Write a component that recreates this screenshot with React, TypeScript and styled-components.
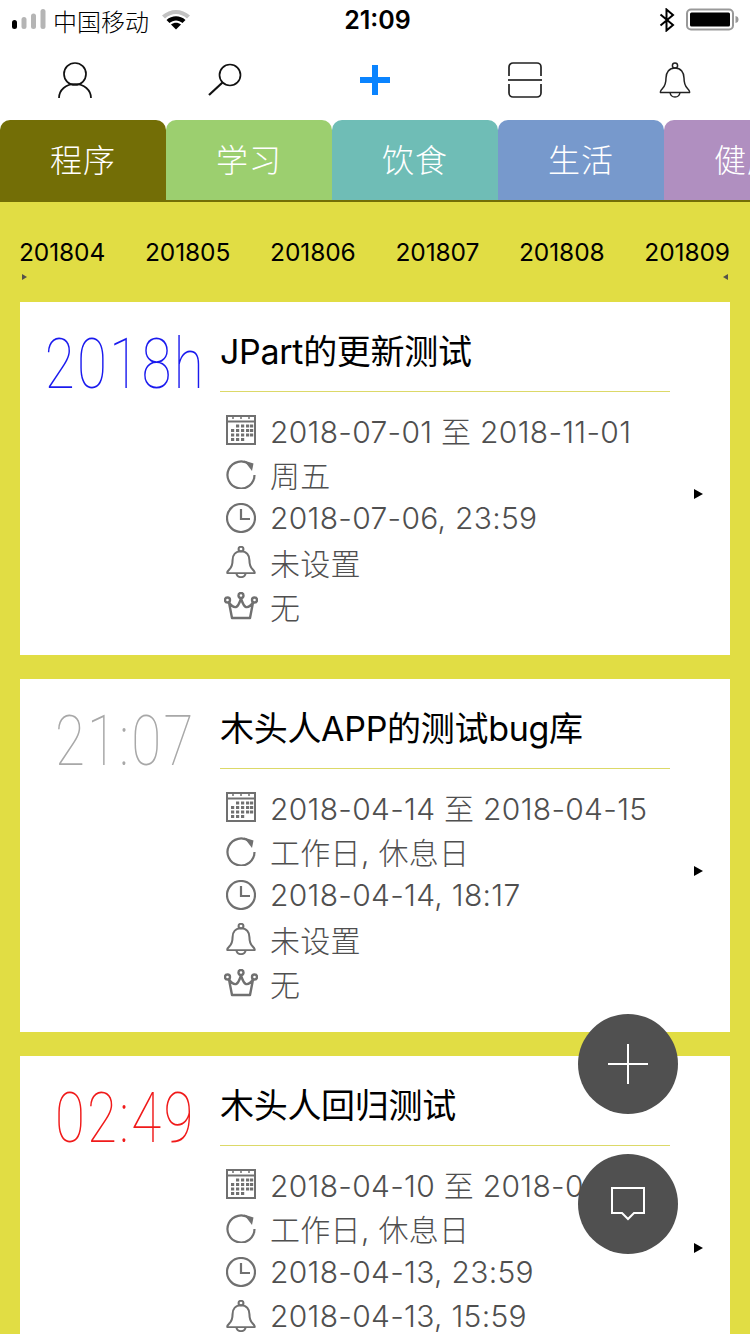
import React from 'react';
import styled, { createGlobalStyle } from 'styled-components';

const GlobalStyle = createGlobalStyle`
  html, body {
    margin: 0;
    padding: 0;
    background: #fff;
  }
  * {
    box-sizing: border-box;
  }
`;

const FONT = `Inter, "Noto Sans CJK SC", sans-serif`;

const Screen = styled.div`
  position: relative;
  width: 750px;
  height: 1334px;
  overflow: hidden;
  font-family: ${FONT};
  background: #e1dd44;
`;

const Top = styled.div`
  background: #fff;
`;

const StatusBar = styled.div`
  display: grid;
  grid-template-columns: 1fr auto 1fr;
  align-items: center;
  height: 40px;
  padding: 0 10px 0 12px;
  color: #000;
`;

const StatusLeft = styled.div`
  display: flex;
  align-items: center;
  gap: 7px;
  font-size: 24px;
  font-weight: 300;
`;

const StatusTime = styled.div`
  font-size: 25px;
  font-weight: 600;
  padding-left: 3px;
`;

const StatusRight = styled.div`
  display: flex;
  justify-content: flex-end;
  align-items: center;
  gap: 11px;
`;

const Nav = styled.div`
  display: grid;
  grid-template-columns: repeat(5, 150px);
  height: 80px;
`;

const NavItem = styled.div`
  display: flex;
  align-items: center;
  justify-content: center;
`;

const Tabs = styled.div`
  display: flex;
  height: 82px;
  border-bottom: 2px solid #736e06;
`;

const Tab = styled.div<{ $bg: string }>`
  flex: 0 0 166px;
  display: flex;
  align-items: center;
  justify-content: center;
  padding-bottom: 4px;
  border-radius: 10px 10px 0 0;
  background: ${(p) => p.$bg};
  color: #fff;
  font-size: 32px;
  font-weight: 300;
  letter-spacing: 1px;
`;

const Months = styled.div`
  display: flex;
  justify-content: space-between;
  padding: 35px 20px 0 19px;
  height: 61px;
  font-size: 24.5px;
  letter-spacing: -0.1px;
  line-height: 30px;
  color: #000;
`;

const MonthMarks = styled.div`
  display: flex;
  justify-content: space-between;
  align-items: center;
  height: 28px;
  margin-bottom: 11px;
  padding: 0 22px;
`;

const MonthMark = styled.div<{ $flip?: boolean }>`
  width: 0;
  height: 0;
  border-top: 3px solid transparent;
  border-bottom: 3px solid transparent;
  ${(p) => (p.$flip ? 'border-right: 5px solid #55524a;' : 'border-left: 5px solid #55524a;')}
`;

const CardList = styled.div`
  display: flex;
  flex-direction: column;
  gap: 24px;
  padding: 0 20px;
`;

const Card = styled.div`
  display: flex;
  flex: 0 0 353px;
  background: #fff;
`;

const TimeColumn = styled.div`
  flex: 0 0 200px;
  min-width: 0;
  display: flex;
  justify-content: center;
  padding: 24px 0 0 10px;
`;

const TimeValue = styled.div<{ $color: string }>`
  flex: none;
  height: 76px;
  font-family: Roboto, sans-serif;
  font-weight: 100;
  font-size: 70px;
  line-height: 76px;
  letter-spacing: 3px;
  white-space: nowrap;
  color: ${(p) => p.$color};
  transform: scaleX(0.78);
`;

const Body = styled.div`
  flex: 0 0 450px;
  padding-top: 28px;
`;

const Title = styled.div`
  height: 62px;
  line-height: 44px;
  font-size: 34px;
  letter-spacing: -0.3px;
  color: #000;
  border-bottom: 1px solid #dcd968;
`;

const Rows = styled.div`
  padding-top: 18px;
`;

const Row = styled.div`
  display: flex;
  align-items: center;
  height: 44px;
  padding-bottom: 4px;
  font-size: 30px;
  font-weight: 300;
  letter-spacing: 0.3px;
  color: #4f4f4f;
  white-space: nowrap;
`;

const RowIcon = styled.div`
  flex: 0 0 50px;
  display: flex;
  justify-content: center;
  padding-right: 9px;
`;

const Chevron = styled.div`
  align-self: center;
  margin: 30px 0 0 24px;
  width: 0;
  height: 0;
  border-top: 5px solid transparent;
  border-bottom: 5px solid transparent;
  border-left: 9px solid #000;
`;

const Fab = styled.div<{ $top: number }>`
  position: absolute;
  left: 578px;
  top: ${(p) => p.$top}px;
  width: 100px;
  height: 100px;
  border-radius: 50%;
  background: #505050;
  display: flex;
  align-items: center;
  justify-content: center;
`;

const Glyph = styled.svg`
  display: block;
  flex: none;
`;

const PersonIcon = () => (
  <Glyph width="34" height="38" viewBox="0 0 34 38" fill="none" stroke="#111" strokeWidth="1.700">
    <circle cx="17" cy="13" r="11" />
    <path d="M1 37c0-8 7-14 16-14s16 6 16 14" />
  </Glyph>
);

const SearchIcon = () => (
  <Glyph width="34" height="34" viewBox="0 0 34 34" fill="none" stroke="#111" strokeWidth="1.700">
    <circle cx="22" cy="12" r="10.500" />
    <path d="M14.500 19.500 1 32" strokeWidth="2.200" />
  </Glyph>
);

const PlusBlue = () => (
  <Glyph width="30" height="30" viewBox="0 0 30 30" fill="#0a84ff">
    <path d="M12 0h6v12h12v6H18v12h-6V18H0v-6h12z" />
  </Glyph>
);

const ScanIcon = () => (
  <Glyph width="36" height="36" viewBox="0 0 36 36" fill="none" stroke="#222" strokeWidth="1.700">
    <path d="M2 14V5a4 4 0 0 1 4-4h24a4 4 0 0 1 4 4v9" />
    <path d="M2 22v9a4 4 0 0 0 4 4h24a4 4 0 0 0 4-4v-9" />
    <path d="M1 18h34" strokeWidth="2.200" stroke="#444" />
  </Glyph>
);

const BellIcon = ({ w = 32, h = 36, color = '#222', sw = 1.500 }: { w?: number; h?: number; color?: string; sw?: number }) => (
  <Glyph width={w} height={h} viewBox="0 0 32 36" fill="none" stroke={color} strokeWidth={sw} preserveAspectRatio="none">
    <circle cx="16" cy="3.500" r="2.600" />
    <path d="M16 6c-6 0-9 4.500-9 10 0 5-1 8-3.500 10.500C2 28 1 29.500 1.500 30.500h29c.5-1-.5-2.500-2-4C26 24 25 21 25 16c0-5.500-3-10-9-10z" />
    <path d="M11 30.500c.5 3 2.500 4.500 5 4.500s4.500-1.500 5-4.500" />
  </Glyph>
);

const CalendarIcon = () => (
  <Glyph width="30" height="30" viewBox="0 0 30 30" fill="none" stroke="#707070">
    <rect x="1" y="1" width="28" height="28" strokeWidth="2" />
    <path d="M1 6.500h28" strokeWidth="2" />
    <path d="M7 1v3M15 1v3M23 1v3" strokeWidth="1.500" />
    <g fill="#707070" stroke="none">
      {[10.500, 15, 19.500, 24].flatMap((y, r) =>
        [5, 10, 15, 20, 24].map((x, c) =>
          (r === 0 && c < 1) || (r === 3 && c > 2) ? null : (
            <rect key={`${r}-${c}`} x={x} y={y - 1} width="3.200" height="3" />
          ),
        ),
      )}
    </g>
  </Glyph>
);

const RepeatIcon = () => (
  <Glyph width="30" height="30" viewBox="0 0 30 30" fill="none" stroke="#707070" strokeWidth="2.200">
    <path d="M23.500 5.500A13.500 13.500 0 1 0 28.500 16" />
    <path d="M18 1.500 27.500 4.500 26 12z" fill="#707070" stroke="none" />
  </Glyph>
);

const ClockIcon = () => (
  <Glyph width="30" height="30" viewBox="0 0 30 30" fill="none" stroke="#707070" strokeWidth="2.200">
    <circle cx="15" cy="15" r="14" />
    <path d="M15 6v10h9" />
  </Glyph>
);

const CrownIcon = () => (
  <Glyph width="34" height="28" viewBox="0 0 34 28" fill="none" stroke="#707070" strokeWidth="2.400">
    <circle cx="17" cy="3.500" r="2.500" />
    <circle cx="3.500" cy="8" r="2.500" />
    <circle cx="30.500" cy="8" r="2.500" />
    <path d="M5 10.500c2 3 4.500 5 7 4.500 2-.5 3.500-4 5-8.500 1.500 4.500 3 8 5 8.500 2.500.5 5-1.500 7-4.500L26 26H8z" strokeLinejoin="round" />
  </Glyph>
);

const SignalBars = () => (
  <Glyph width="34" height="22" viewBox="0 0 34 22">
    <rect x="0" y="11" width="5" height="9" rx="2.500" fill="#000" />
    <rect x="9.500" y="8" width="5" height="12" rx="2.500" fill="#b5b5b5" />
    <rect x="19" y="4.500" width="5" height="15.500" rx="2.500" fill="#b5b5b5" />
    <rect x="28.500" y="0" width="5" height="20" rx="2.500" fill="#b5b5b5" />
  </Glyph>
);

const WifiIcon = () => (
  <Glyph width="28" height="22" viewBox="0 0 28 22" style={{ marginLeft: 6 }}>
    <path d="M0 6.500C8-1 20-1 28 6.500l-3 3C18.500 3.500 9.500 3.500 3 9.500z" fill="#c2c2c2" />
    <path d="M4.500 11c5.500-5 13.500-5 19 0L20.500 14c-4-3.500-9-3.500-13 0z" fill="#000" />
    <path d="M9 15.500c3-2.500 7-2.500 10 0L14 20.500z" fill="#000" />
  </Glyph>
);

const BluetoothIcon = () => (
  <Glyph width="16" height="24" viewBox="0 0 16 24" fill="none" stroke="#000" strokeWidth="2">
    <path d="M1.500 6.500 14 17l-6.500 5.500v-21L14 7 1.500 17.500" />
  </Glyph>
);

const BatteryIcon = () => (
  <Glyph width="54" height="24" viewBox="0 0 54 24">
    <rect x="1" y="1.500" width="46" height="20" rx="4" fill="none" stroke="#999" strokeWidth="2" />
    <rect x="4" y="4.500" width="40" height="14" rx="1.500" fill="#000" />
    <path d="M49.500 8c2 .3 3 1.500 3 3.500s-1 3.200-3 3.500z" fill="#999" />
  </Glyph>
);

const FabPlus = () => (
  <Glyph width="40" height="40" viewBox="0 0 40 40" stroke="#fff" strokeWidth="2">
    <path d="M20 0v40M0 20h40" />
  </Glyph>
);

const FabComment = () => (
  <Glyph width="34" height="34" viewBox="0 0 34 34" fill="none" stroke="#fff" strokeWidth="2">
    <path d="M1 1h32v25H23l-6 6-6-6H1z" />
  </Glyph>
);

const tabs = [
  { label: '程序', bg: '#736e06' },
  { label: '学习', bg: '#9ccf6f' },
  { label: '饮食', bg: '#6fbdb6' },
  { label: '生活', bg: '#7799cc' },
  { label: '健康', bg: '#b08fc0' },
];

const months = ['201804', '201805', '201806', '201807', '201808', '201809'];

const cards = [
  {
    time: '2018h',
    color: '#1a1aee',
    title: 'JPart的更新测试',
    rows: ['2018-07-01 至 2018-11-01', '周五', '2018-07-06, 23:59', '未设置', '无'],
  },
  {
    time: '21:07',
    color: '#a8a8a8',
    title: '木头人APP的测试bug库',
    rows: ['2018-04-14 至 2018-04-15', '工作日, 休息日', '2018-04-14, 18:17', '未设置', '无'],
  },
  {
    time: '02:49',
    color: '#f01a1a',
    title: '木头人回归测试',
    rows: ['2018-04-10 至 2018-04-13', '工作日, 休息日', '2018-04-13, 23:59', '2018-04-13, 15:59', '无'],
  },
];

const rowIcons = [
  <CalendarIcon key="calendar" />,
  <RepeatIcon key="repeat" />,
  <ClockIcon key="clock" />,
  <BellIcon key="bell" w={30} h={32} color="#707070" sw={2.200} />,
  <CrownIcon key="crown" />,
];

export default function App() {
  return (
    <Screen>
      <GlobalStyle />
      <Top>
        <StatusBar>
          <StatusLeft>
            <SignalBars />
            <span>中国移动</span>
            <WifiIcon />
          </StatusLeft>
          <StatusTime>21:09</StatusTime>
          <StatusRight>
            <BluetoothIcon />
            <BatteryIcon />
          </StatusRight>
        </StatusBar>
        <Nav>
          <NavItem><PersonIcon /></NavItem>
          <NavItem><SearchIcon /></NavItem>
          <NavItem><PlusBlue /></NavItem>
          <NavItem><ScanIcon /></NavItem>
          <NavItem><BellIcon /></NavItem>
        </Nav>
        <Tabs>
          {tabs.map((tab) => (
            <Tab key={tab.label} $bg={tab.bg}>{tab.label}</Tab>
          ))}
        </Tabs>
      </Top>
      <Months>
        {months.map((m) => (
          <span key={m}>{m}</span>
        ))}
      </Months>
      <MonthMarks>
        <MonthMark />
        <MonthMark $flip />
      </MonthMarks>
      <CardList>
        {cards.map((card) => (
          <Card key={card.title}>
            <TimeColumn>
              <TimeValue $color={card.color}>{card.time}</TimeValue>
            </TimeColumn>
            <Body>
              <Title>{card.title}</Title>
              <Rows>
                {card.rows.map((text, i) => (
                  <Row key={i}>
                    <RowIcon>{rowIcons[i]}</RowIcon>
                    {text}
                  </Row>
                ))}
              </Rows>
            </Body>
            <Chevron />
          </Card>
        ))}
      </CardList>
      <Fab $top={1014}><FabPlus /></Fab>
      <Fab $top={1154}><FabComment /></Fab>
    </Screen>
  );
}
